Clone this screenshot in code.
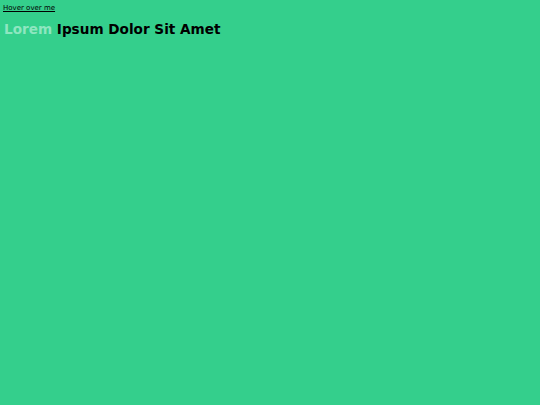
export default function App() {
  return (
    <div className="min-h-screen w-full bg-[#34cf8c] px-[3px] pt-[4px] font-['DejaVu_Sans',sans-serif] text-black">
      <a href="#" className="block text-[7px] leading-[9px] underline">
        Hover over me
      </a>
      <h1 className="mt-[8px] ml-px text-[13.6px] font-bold leading-[16px]">
        <span className="text-[#8ee6c0]">Lorem</span> Ipsum Dolor Sit Amet
      </h1>
    </div>
  );
}
